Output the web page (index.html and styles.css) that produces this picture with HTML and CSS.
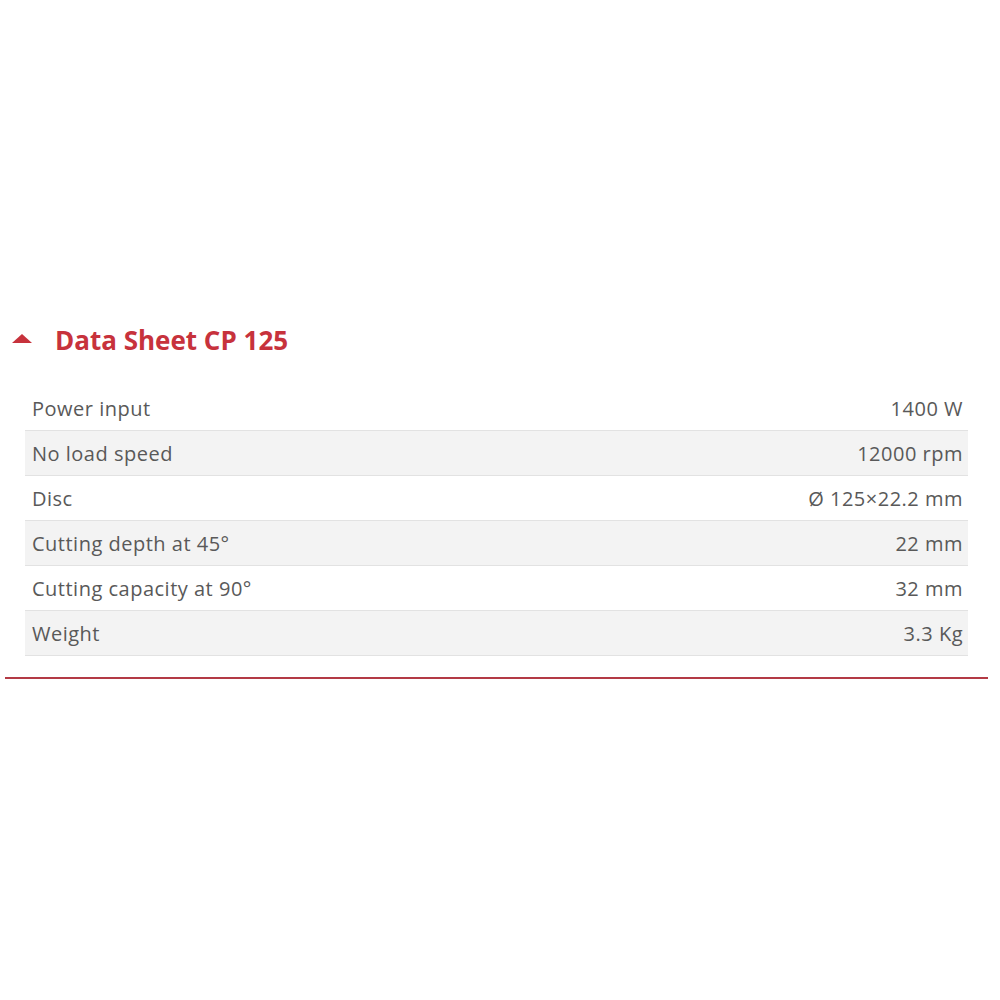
FILE: index.html
```html
<!DOCTYPE html>
<html>
<head>
<meta charset="utf-8">
<link rel="stylesheet" href="styles.css">
</head>
<body>
<div class="page">
  <section class="sheet">
    <h2 class="title"><span class="caret"></span>Data Sheet CP 125</h2>
    <table class="specs">
      <tr><td>Power input</td><td class="val">1400 W</td></tr>
      <tr><td>No load speed</td><td class="val">12000 rpm</td></tr>
      <tr><td>Disc</td><td class="val">Ø 125×22.2 mm</td></tr>
      <tr><td>Cutting depth at 45°</td><td class="val">22 mm</td></tr>
      <tr><td>Cutting capacity at 90°</td><td class="val">32 mm</td></tr>
      <tr><td>Weight</td><td class="val">3.3 Kg</td></tr>
    </table>
    <div class="rule"></div>
  </section>
</div>
</body>
</html>
```
FILE: styles.css
```css
html, body {
  margin: 0;
  padding: 0;
  background: #fff;
}
body {
  font-family: "Open Sans", "Noto Sans", sans-serif;
  color: #555;
}
.page {
  width: 1000px;
  height: 1000px;
  padding-top: 322px;
  box-sizing: border-box;
}
.sheet {
  padding: 0 12px 0 5px;
}
.title {
  margin: 0 0 0 7px;
  display: flex;
  align-items: center;
  font-family: "Open Sans", sans-serif;
  font-weight: 700;
  font-size: 26px;
  color: #c7323c;
  height: 36px;
}
.caret {
  width: 0;
  height: 0;
  border-left: 10px solid transparent;
  border-right: 10px solid transparent;
  border-bottom: 9px solid #c7323c;
  margin-right: 23px;
  margin-top: -4px;
}
.specs {
  margin: 28px 0 0 20px;
  width: 943px;
  border-collapse: collapse;
  font-size: 20px;
  color: #595959;
}
.specs td {
  height: 44px;
  padding: 0 5px 0 7px;
  border-bottom: 1px solid #e2e2e2;
  letter-spacing: 0.5px;
}
.specs tr:nth-child(even) td {
  background: #f3f3f3;
}
.specs .val {
  text-align: right;
}
.rule {
  margin-top: 21px;
  height: 2px;
  background: #b33a45;
}
```
